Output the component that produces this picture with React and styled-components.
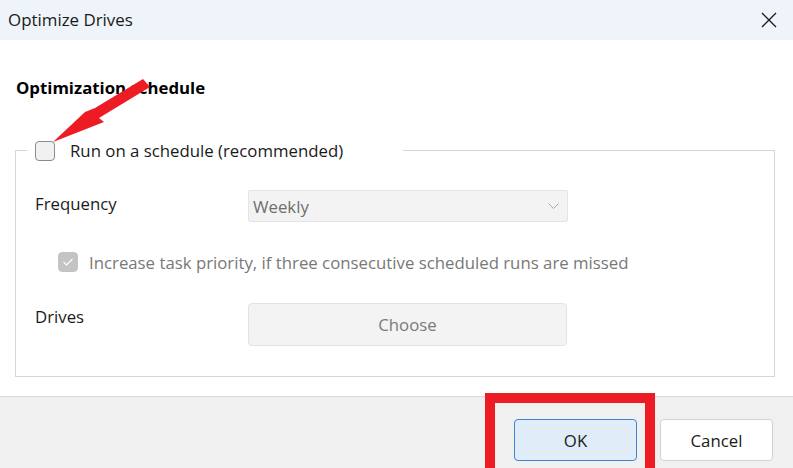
import React from "react";
import styled, { createGlobalStyle } from "styled-components";

const GlobalStyle = createGlobalStyle`
  html, body { margin: 0; padding: 0; background: #ffffff; }
  body { font-family: "Open Sans", "Noto Sans", sans-serif; }
  * { box-sizing: border-box; }
`;

const Window = styled.div`
  position: relative;
  width: 793px;
  height: 468px;
  display: flex;
  flex-direction: column;
  background: #ffffff;
  overflow: hidden;
`;

const TitleBar = styled.div`
  height: 40px;
  flex: 0 0 40px;
  display: flex;
  align-items: center;
  justify-content: space-between;
  padding: 0 14px 0 8px;
  background: #eef4f9;
`;

const Title = styled.span`
  font-size: 16.9px;
  color: #1a1a1a;
  line-height: 24px;
`;

const CloseButton = styled.button`
  width: 20px;
  height: 20px;
  padding: 0;
  border: 0;
  background: transparent;
  display: flex;
  align-items: center;
  justify-content: center;
`;

const Content = styled.div`
  flex: 1;
  display: flex;
  flex-direction: column;
`;

const Heading = styled.h2`
  margin: 36px 0 0 16px;
  font-size: 16.8px;
  line-height: 24px;
  font-weight: 700;
  color: #000000;
`;

const Group = styled.fieldset`
  margin: 39px 18px 0 15px;
  padding: 29px 19px 30px 19px;
  border: 1px solid #d6d6d6;
  min-width: 0;
  display: flex;
  flex-direction: column;
`;

const Legend = styled.legend`
  margin-left: -8px;
  padding: 0 8px;
  width: 376px;
  height: 22px;
  display: flex;
  align-items: center;
  gap: 15px;
  font-size: 16.8px;
  color: #1a1a1a;
  line-height: 24px;
  padding-top: 2px;
`;

const Box = styled.span`
  width: 20px;
  height: 20px;
  flex: 0 0 20px;
  border-radius: 4px;
  border: 1px solid ${(p) => (p.$disabled ? "#c4c4c4" : "#8c8c8c")};
  background: ${(p) => (p.$disabled ? "#c4c4c4" : "#f1f1f1")};
  display: flex;
  align-items: center;
  justify-content: center;
`;

const Row = styled.div`
  display: grid;
  grid-template-columns: 213px 320px;
  align-items: start;
  margin-top: ${(p) => p.$mt || 0}px;
`;

const Label = styled.span`
  margin-top: 2px;
  font-size: 16.8px;
  line-height: 24px;
  color: #1a1a1a;
`;

const Select = styled.div`
  height: 32px;
  display: flex;
  align-items: center;
  justify-content: space-between;
  padding: 0 8px 0 4px;
  background: #f3f3f3;
  border: 1px solid #e4e4e4;
  border-radius: 2px;
  font-size: 16.8px;
  color: #6e6e6e;
`;

const CheckRow = styled.div`
  display: flex;
  align-items: center;
  gap: 11px;
  height: 22px;
  margin: 29px 0 0 23px;
  font-size: 16.8px;
  color: #787878;
`;

const ChooseButton = styled.button`
  width: 319px;
  height: 43px;
  background: #f3f3f3;
  border: 1px solid #e2e2e2;
  border-radius: 4px;
  font-family: inherit;
  font-size: 16.8px;
  color: #7a7a7a;
`;

const Footer = styled.div`
  flex: 0 0 72px;
  height: 72px;
  border-top: 1px solid #dadada;
  background: #f0f0f0;
  display: flex;
  justify-content: flex-end;
  align-items: flex-start;
  gap: 23px;
  padding: 22px 20px 0 0;
`;

const DialogButton = styled.button`
  width: ${(p) => p.$w}px;
  height: 42px;
  border-radius: 4px;
  font-family: inherit;
  font-size: 16.8px;
  color: #1a1a1a;
  background: ${(p) => (p.$primary ? "#e0edf9" : "#ffffff")};
  border: 1px solid ${(p) => (p.$primary ? "#3d86cf" : "#d2d2d2")};
`;

const Highlight = styled.div`
  position: absolute;
  left: 485px;
  top: 393px;
  width: 170px;
  height: 90px;
  border: 10px solid #ed1c24;
  pointer-events: none;
`;

const ArrowLayer = styled.svg`
  position: absolute;
  left: 0;
  top: 0;
  pointer-events: none;
`;

export default function App() {
  return (
    <>
      <GlobalStyle />
      <Window>
        <TitleBar>
          <Title>Optimize Drives</Title>
          <CloseButton aria-label="Close">
            <svg width="16" height="16" viewBox="0 0 16 16">
              <path d="M1 1 L15 15 M15 1 L1 15" stroke="#1a1a1a" strokeWidth="1.3" fill="none" />
            </svg>
          </CloseButton>
        </TitleBar>
        <Content>
          <Heading>Optimization schedule</Heading>
          <Group>
            <Legend>
              <Box />
              <span>Run on a schedule (recommended)</span>
            </Legend>
            <Row>
              <Label>Frequency</Label>
              <Select>
                <span>Weekly</span>
                <svg width="11" height="6" viewBox="0 0 11 6">
                  <path d="M0.5 0.5 L5.5 5.5 L10.5 0.5" stroke="#a8a8a8" strokeWidth="1" fill="none" />
                </svg>
              </Select>
            </Row>
            <CheckRow>
              <Box $disabled>
                <svg width="12" height="10" viewBox="0 0 12 10">
                  <path d="M1.5 5 L4.5 8 L10.5 2" stroke="#ffffff" strokeWidth="1.2" fill="none" />
                </svg>
              </Box>
              <span>Increase task priority, if three consecutive scheduled runs are missed</span>
            </CheckRow>
            <Row $mt={30}>
              <Label>Drives</Label>
              <ChooseButton>Choose</ChooseButton>
            </Row>
          </Group>
        </Content>
        <Footer>
          <DialogButton $primary $w={123}>OK</DialogButton>
          <DialogButton $w={113}>Cancel</DialogButton>
        </Footer>
        <Highlight />
        <ArrowLayer width="793" height="468" viewBox="0 0 793 468">
          <polygon
            points="53,142 85,112 95,108 143,79 150,87 99,118 104,122"
            fill="#ed1c24"
          />
        </ArrowLayer>
      </Window>
    </>
  );
}
